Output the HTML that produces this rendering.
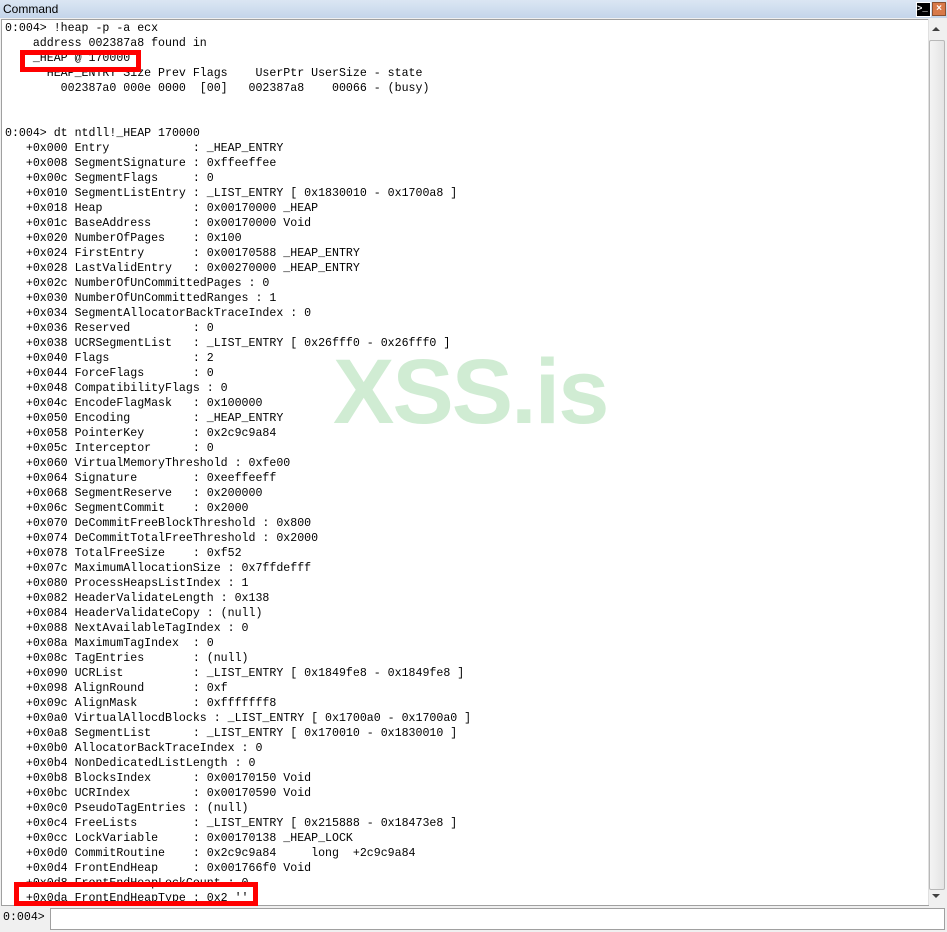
<!DOCTYPE html><html><head><style>
body{margin:0;width:947px;height:932px;background:#f0f0f0;position:relative;overflow:hidden;font-family:"Liberation Sans",sans-serif}
#title{position:absolute;left:0;top:0;width:947px;height:18px;background:linear-gradient(#dbe6f3,#c4d5ea);font-size:12px;line-height:18px;padding-left:3px;box-sizing:border-box;color:#000}
#out{position:absolute;left:1px;top:19px;width:926px;height:885px;background:#fff;border:1px solid #a0a0a0;overflow:hidden}
pre{margin:0;position:absolute;left:3px;top:1px;font-family:"Liberation Mono",monospace;font-size:11.6px;line-height:15px;color:#000}
#sb{position:absolute;left:928px;top:19px;width:17px;height:886px;background:#f0f0f0;border-left:1px solid #e0e0e0}
#thumb{position:absolute;left:929px;top:40px;width:14px;height:848px;background:linear-gradient(90deg,#f4f4f4,#e4e4e4);border:1px solid #b8b8b8;border-radius:2px}
.red{position:absolute;border:5px solid #f00;box-sizing:border-box}
#wm{position:absolute;left:331px;top:320px;font:bold 92px "Liberation Sans",sans-serif;color:rgba(120,200,130,0.35);letter-spacing:-2px}
#in{position:absolute;left:0;top:906px;width:947px;height:26px;background:#f0f0f0}
#lbl{position:absolute;left:3px;top:911px;font-family:"Liberation Mono",monospace;font-size:11.6px}
#box{position:absolute;left:50px;top:908px;width:893px;height:20px;background:#fff;border:1px solid #a0a0a0}
</style></head><body>
<div id="title">Command</div>
<div style="position:absolute;left:916px;top:2px;width:13px;height:13px;background:#000;border:1px solid #fff;color:#fff;font:bold 9px 'Liberation Mono';line-height:13px">&gt;_</div>
<div style="position:absolute;left:932px;top:2px;width:12px;height:12px;background:#d87a4a;border:1px solid #8a5030;color:#fff;font:bold 10px sans-serif;line-height:12px;text-align:center">×</div>
<div id="out"><pre>0:004&gt; !heap -p -a ecx
    address 002387a8 found in
    _HEAP @ 170000
      HEAP_ENTRY Size Prev Flags    UserPtr UserSize - state
        002387a0 000e 0000  [00]   002387a8    00066 - (busy)


0:004&gt; dt ntdll!_HEAP 170000
   +0x000 Entry            : _HEAP_ENTRY
   +0x008 SegmentSignature : 0xffeeffee
   +0x00c SegmentFlags     : 0
   +0x010 SegmentListEntry : _LIST_ENTRY [ 0x1830010 - 0x1700a8 ]
   +0x018 Heap             : 0x00170000 _HEAP
   +0x01c BaseAddress      : 0x00170000 Void
   +0x020 NumberOfPages    : 0x100
   +0x024 FirstEntry       : 0x00170588 _HEAP_ENTRY
   +0x028 LastValidEntry   : 0x00270000 _HEAP_ENTRY
   +0x02c NumberOfUnCommittedPages : 0
   +0x030 NumberOfUnCommittedRanges : 1
   +0x034 SegmentAllocatorBackTraceIndex : 0
   +0x036 Reserved         : 0
   +0x038 UCRSegmentList   : _LIST_ENTRY [ 0x26fff0 - 0x26fff0 ]
   +0x040 Flags            : 2
   +0x044 ForceFlags       : 0
   +0x048 CompatibilityFlags : 0
   +0x04c EncodeFlagMask   : 0x100000
   +0x050 Encoding         : _HEAP_ENTRY
   +0x058 PointerKey       : 0x2c9c9a84
   +0x05c Interceptor      : 0
   +0x060 VirtualMemoryThreshold : 0xfe00
   +0x064 Signature        : 0xeeffeeff
   +0x068 SegmentReserve   : 0x200000
   +0x06c SegmentCommit    : 0x2000
   +0x070 DeCommitFreeBlockThreshold : 0x800
   +0x074 DeCommitTotalFreeThreshold : 0x2000
   +0x078 TotalFreeSize    : 0xf52
   +0x07c MaximumAllocationSize : 0x7ffdefff
   +0x080 ProcessHeapsListIndex : 1
   +0x082 HeaderValidateLength : 0x138
   +0x084 HeaderValidateCopy : (null)
   +0x088 NextAvailableTagIndex : 0
   +0x08a MaximumTagIndex  : 0
   +0x08c TagEntries       : (null)
   +0x090 UCRList          : _LIST_ENTRY [ 0x1849fe8 - 0x1849fe8 ]
   +0x098 AlignRound       : 0xf
   +0x09c AlignMask        : 0xfffffff8
   +0x0a0 VirtualAllocdBlocks : _LIST_ENTRY [ 0x1700a0 - 0x1700a0 ]
   +0x0a8 SegmentList      : _LIST_ENTRY [ 0x170010 - 0x1830010 ]
   +0x0b0 AllocatorBackTraceIndex : 0
   +0x0b4 NonDedicatedListLength : 0
   +0x0b8 BlocksIndex      : 0x00170150 Void
   +0x0bc UCRIndex         : 0x00170590 Void
   +0x0c0 PseudoTagEntries : (null)
   +0x0c4 FreeLists        : _LIST_ENTRY [ 0x215888 - 0x18473e8 ]
   +0x0cc LockVariable     : 0x00170138 _HEAP_LOCK
   +0x0d0 CommitRoutine    : 0x2c9c9a84     long  +2c9c9a84
   +0x0d4 FrontEndHeap     : 0x001766f0 Void
   +0x0d8 FrontEndHeapLockCount : 0
   +0x0da FrontEndHeapType : 0x2 ''</pre>
<div id="wm">XSS.is</div>
</div>
<div class="red" style="left:20px;top:50px;width:121px;height:22px"></div>
<div class="red" style="left:14px;top:882px;width:244px;height:24px"></div>
<div id="sb"></div>
<div id="thumb"></div>
<div style="position:absolute;left:932px;top:27px;width:0;height:0;border-left:4px solid transparent;border-right:4px solid transparent;border-bottom:4px solid #404040"></div>
<div style="position:absolute;left:932px;top:894px;width:0;height:0;border-left:4px solid transparent;border-right:4px solid transparent;border-top:4px solid #404040"></div>
<div id="in"></div>
<div id="lbl">0:004&gt;</div>
<div id="box"></div>
</body></html>
